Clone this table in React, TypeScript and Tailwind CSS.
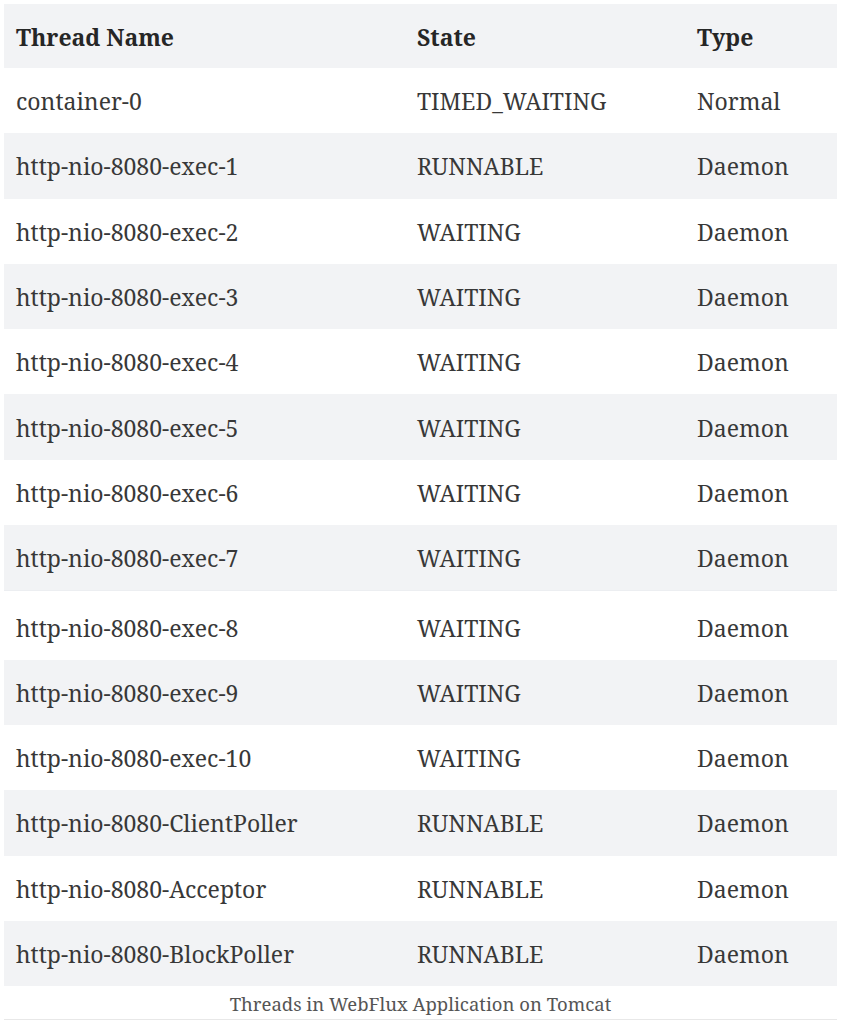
const upper = [
  ["container-0", "TIMED_WAITING", "Normal"],
  ["http-nio-8080-exec-1", "RUNNABLE", "Daemon"],
  ["http-nio-8080-exec-2", "WAITING", "Daemon"],
  ["http-nio-8080-exec-3", "WAITING", "Daemon"],
  ["http-nio-8080-exec-4", "WAITING", "Daemon"],
  ["http-nio-8080-exec-5", "WAITING", "Daemon"],
  ["http-nio-8080-exec-6", "WAITING", "Daemon"],
  ["http-nio-8080-exec-7", "WAITING", "Daemon"],
];

const lower = [
  ["http-nio-8080-exec-8", "WAITING", "Daemon"],
  ["http-nio-8080-exec-9", "WAITING", "Daemon"],
  ["http-nio-8080-exec-10", "WAITING", "Daemon"],
  ["http-nio-8080-ClientPoller", "RUNNABLE", "Daemon"],
  ["http-nio-8080-Acceptor", "RUNNABLE", "Daemon"],
  ["http-nio-8080-BlockPoller", "RUNNABLE", "Daemon"],
];

function Row({ cells, shaded }: { cells: string[]; shaded: boolean }) {
  return (
    <div
      className={`grid h-[65.3px] grid-cols-[401px_280px_1fr] items-center text-[23px] leading-none text-[#383838] ${
        shaded ? "bg-[#f2f3f5]" : "bg-white"
      }`}
    >
      {cells.map((c, i) => (
        <div key={i} className="pl-3 pt-[2px]">
          {c}
        </div>
      ))}
    </div>
  );
}

export default function App() {
  return (
    <div
      className="min-h-[1024px] bg-white px-[4px] pt-[4px]"
      style={{ fontFamily: '"Noto Serif", "DejaVu Serif", serif' }}
    >
      <div className="w-[833px]">
        <div className="grid h-[64px] grid-cols-[401px_280px_1fr] items-center bg-[#f2f3f5] text-[23px] font-bold leading-none text-[#262626]">
          <div className="pl-3 pt-[3px]">Thread Name</div>
          <div className="pl-3 pt-[3px]">State</div>
          <div className="pl-3 pt-[3px]">Type</div>
        </div>
        {upper.map((r, i) => (
          <Row key={r[0]} cells={r} shaded={i % 2 === 1} />
        ))}
        <div className="h-[4px] border-t border-[#eceef1] bg-white" />
        {lower.map((r, i) => (
          <Row key={r[0]} cells={r} shaded={i % 2 === 1} />
        ))}
        <div className="flex h-[34px] items-center justify-center border-b border-[#e8e8e8] pt-[3px] text-[18.5px] leading-none text-[#555]">
          Threads in WebFlux Application on Tomcat
        </div>
      </div>
    </div>
  );
}
